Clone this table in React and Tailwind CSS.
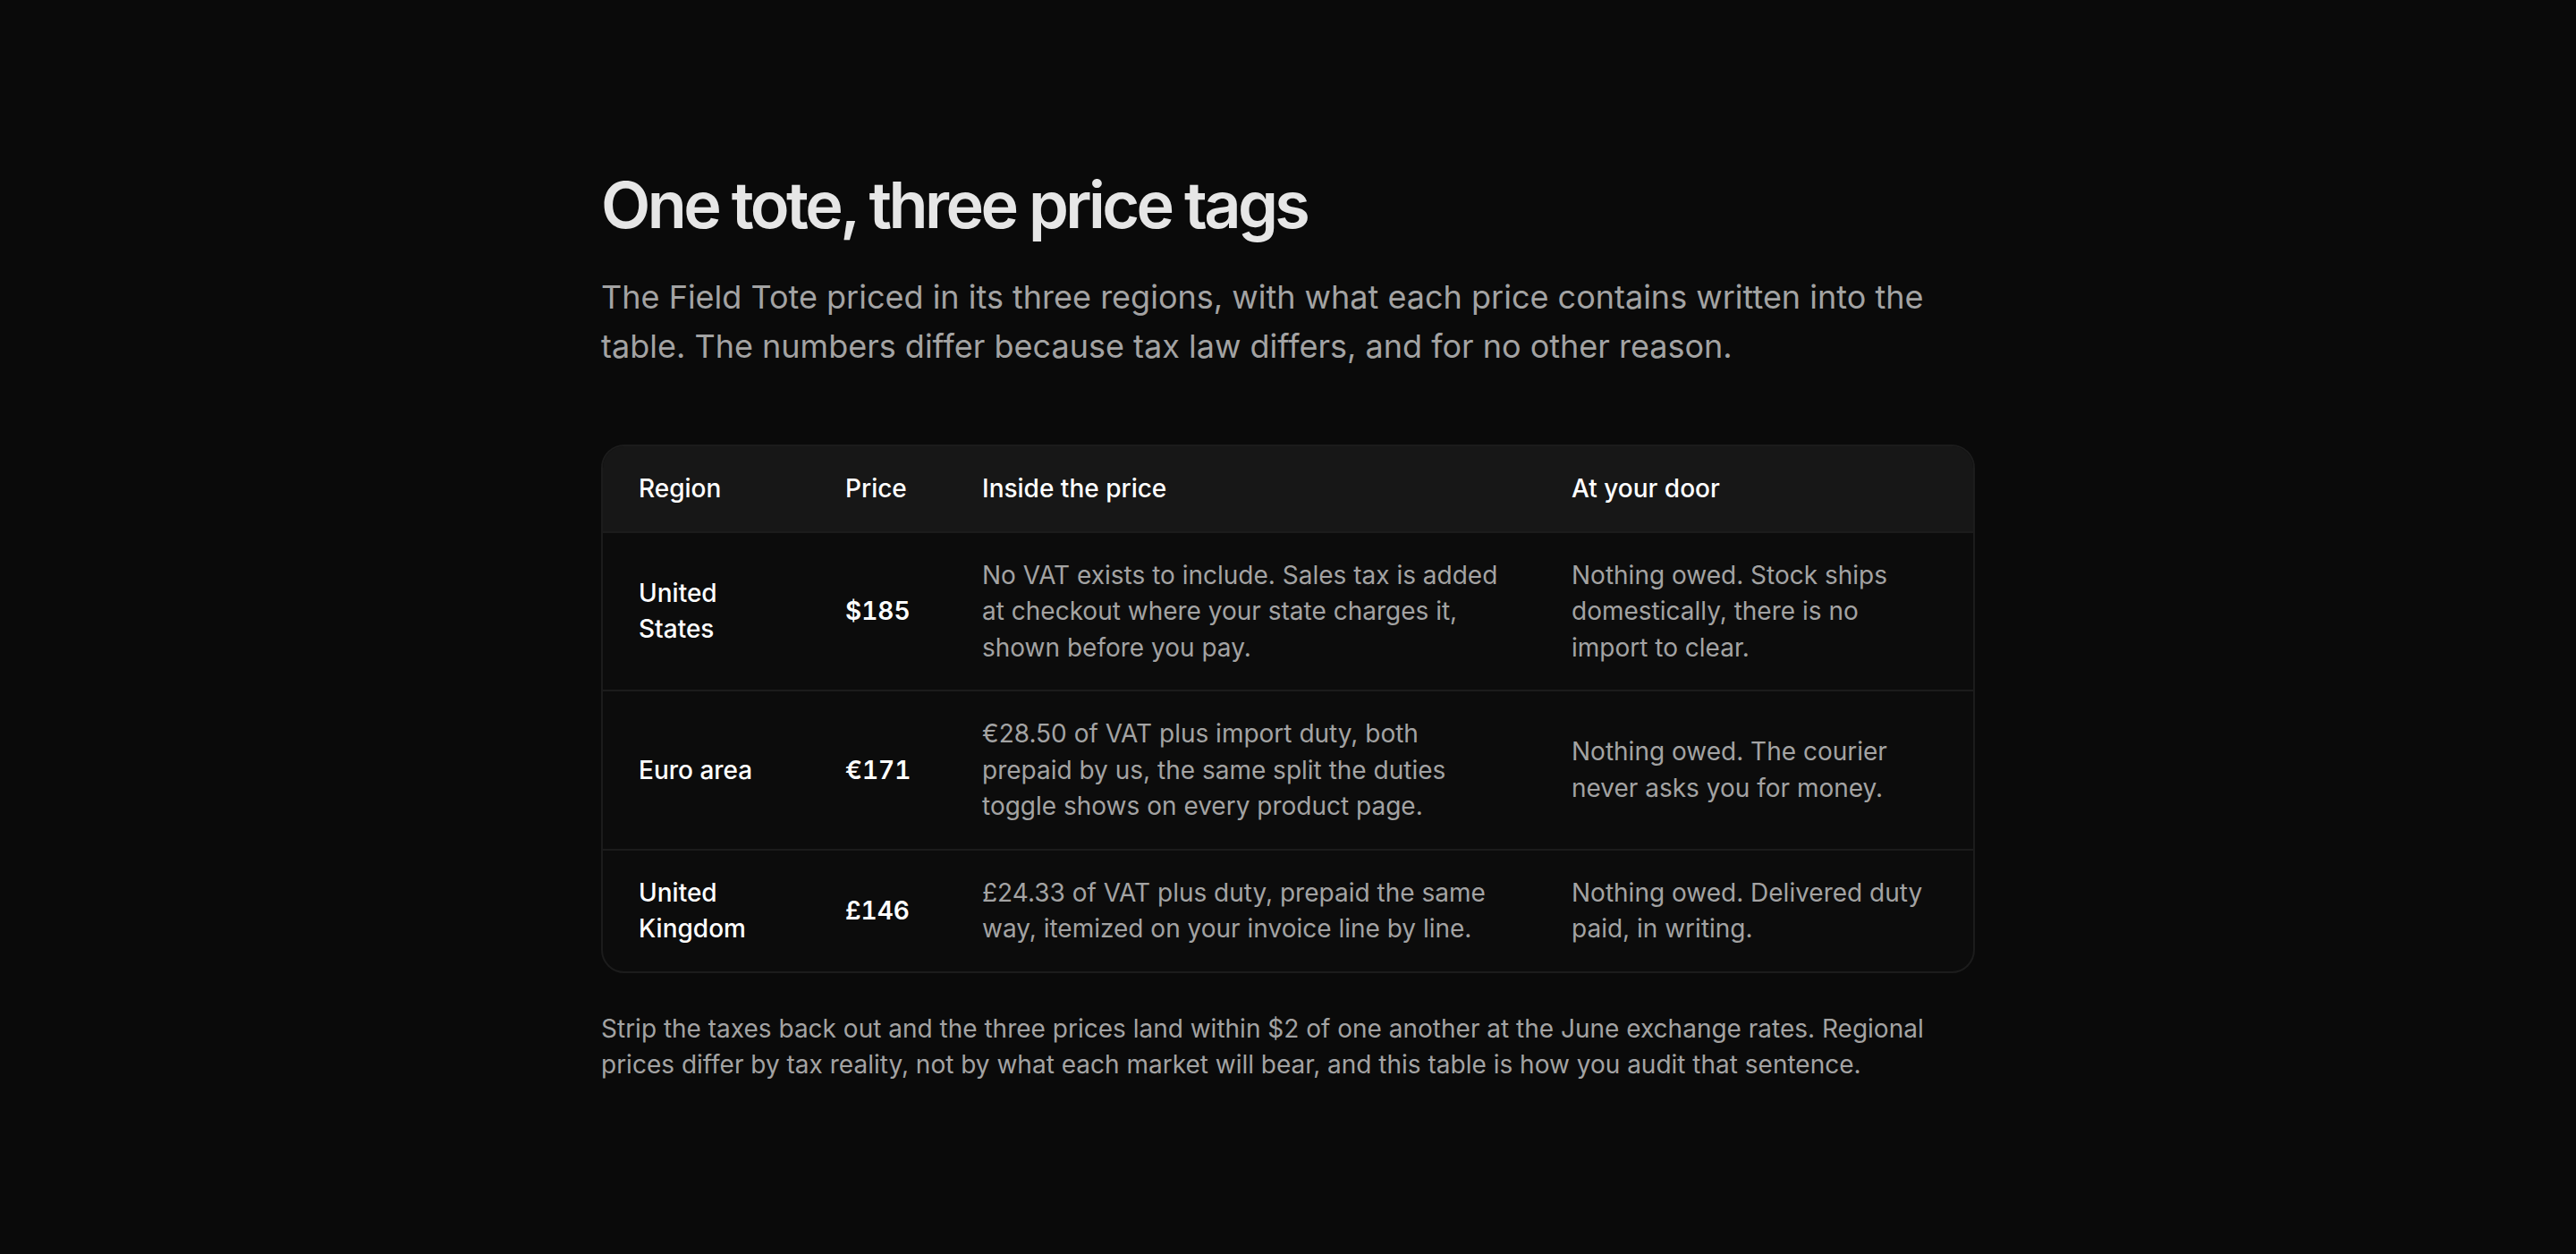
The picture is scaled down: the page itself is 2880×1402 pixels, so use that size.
const rows = [
  {
    region: 'United States',
    price: '$185',
    inside: 'No VAT exists to include. Sales tax is added at checkout where your state charges it, shown before you pay.',
    door: 'Nothing owed. Stock ships domestically, there is no import to clear.'
  },
  {
    region: 'Euro area',
    price: '€171',
    inside: '€28.50 of VAT plus import duty, both prepaid by us, the same split the duties toggle shows on every product page.',
    door: 'Nothing owed. The courier never asks you for money.'
  },
  {
    region: 'United Kingdom',
    price: '£146',
    inside: '£24.33 of VAT plus duty, prepaid the same way, itemized on your invoice line by line.',
    door: 'Nothing owed. Delivered duty paid, in writing.'
  }
];

const grid = 'grid grid-cols-[231px_153px_659px_1fr] items-center pl-[40px] pr-[48px]';

export default function App() {
  return (
    <div className="min-h-screen bg-[#0a0a0a] font-['Inter',sans-serif] antialiased">
      <main className="mx-auto max-w-[1536px] pt-[189px] pb-[120px]">
        <h1 className="text-[72px] font-semibold leading-[1.1] tracking-[-0.05em] text-[#e6e6e6]">
          One tote, three price tags
        </h1>
        <p className="mt-[37px] text-[36px] leading-[55px] text-[#a3a3a3]">
          The Field Tote priced in its three regions, with what each price contains written into the table. The numbers differ because tax law differs, and for no other reason.
        </p>

        <div className="mt-[82px] overflow-hidden rounded-[26px] border-2 border-[#1c1c1c] bg-[#0c0c0c]">
          <div className={`${grid} bg-[#171717] py-[27px] text-[28px] font-medium leading-[40.5px] text-white`}>
            <div>Region</div>
            <div>Price</div>
            <div>Inside the price</div>
            <div>At your door</div>
          </div>
          {rows.map((row) => (
            <div
              key={row.region}
              className={`${grid} border-t-2 border-[#1c1c1c] py-[27px] text-[28px] leading-[40.5px]`}
            >
              <div className="pr-[80px] font-medium text-white">{row.region}</div>
              <div className="font-semibold tabular-nums text-white">{row.price}</div>
              <div className="pr-[79px] text-[#a3a3a3]">{row.inside}</div>
              <div className="text-[#a3a3a3]">{row.door}</div>
            </div>
          ))}
        </div>

        <p className="mt-[42px] text-[28px] leading-[40.5px] text-[#a3a3a3]">
          Strip the taxes back out and the three prices land within $2 of one another at the June exchange rates. Regional prices differ by tax reality, not by what each market will bear, and this table is how you audit that sentence.
        </p>
      </main>
    </div>
  );
}
